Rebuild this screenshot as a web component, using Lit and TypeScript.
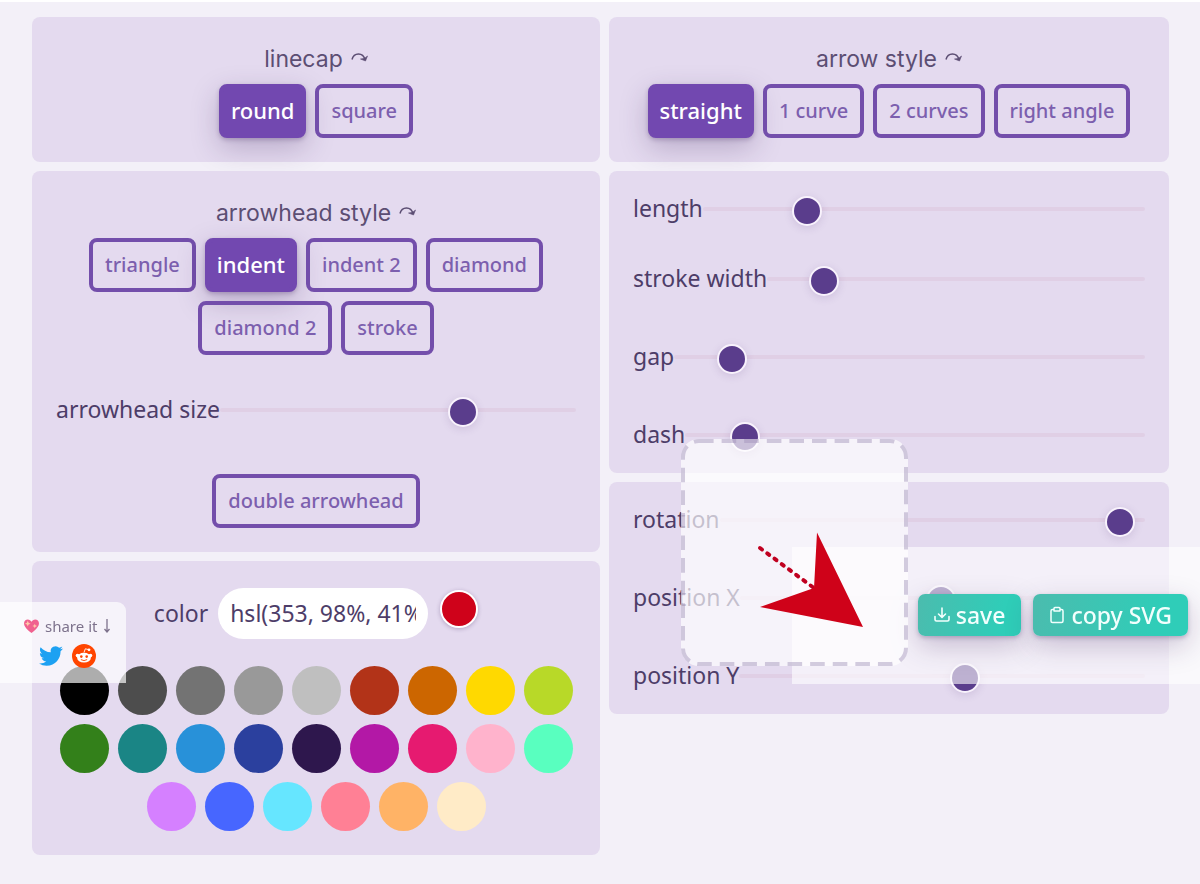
import { LitElement, html, css } from "lit";
import { customElement, property, state } from "lit/decorators.js";
import { classMap } from "lit/directives/class-map.js";
import { styleMap } from "lit/directives/style-map.js";

const SWATCHES = [
  "#000000", "#4d4d4d", "#737373", "#999999", "#bfbfbf", "#b23318", "#cc6600", "#ffd900", "#b8d928",
  "#33801a", "#1a8585", "#2891d9", "#2b409e", "#2e174d", "#b318a6", "#e61a70", "#ffb3cc", "#59ffbf",
  "#d580ff", "#4766ff", "#66e6ff", "#ff8095", "#ffb366", "#ffebc7",
];

@customElement("option-group")
class OptionGroup extends LitElement {
  @property() heading = "";
  @property({ type: Array }) options: string[] = [];
  @property() value = "";

  static styles = css`
    :host { display: block; }
    .heading {
      display: flex;
      justify-content: center;
      align-items: center;
      gap: 8px;
      margin: 0 0 7px;
      font: 400 23px/36px Inter, sans-serif;
      color: #5c4e73;
    }
    .turn { width: 17px; height: 14px; }
    .options {
      display: flex;
      flex-wrap: wrap;
      justify-content: center;
      gap: 9px;
    }
    .option {
      box-sizing: border-box;
      height: 54px;
      padding: 0 12px;
      border: 4px solid #734eab;
      border-radius: 8px;
      background: none;
      font: 500 20px/28px "Noto Sans", sans-serif;
      color: #7c5fae;
      cursor: pointer;
    }
    .option.active {
      padding: 0 8px 2px;
      background: #7248b0;
      border-color: #7248b0;
      color: #fff;
      font-size: 22px;
      box-shadow: 0 2px 4px rgba(60, 30, 90, 0.25), 0 10px 28px rgba(60, 30, 90, 0.25);
    }
  `;

  render() {
    return html`
      <h2 class="heading">
        ${this.heading}
        <svg class="turn" viewBox="0 0 17 14" fill="none" stroke="currentColor" stroke-width="1.5" aria-hidden="true">
          <path d="M1 7.500C2 3.500 4.500 2 7.500 2C11 2 13 4 14 7.500" />
          <path d="M9.500 7L14.500 9L16.500 4Q14 7 9.500 7Z" fill="currentColor" stroke-width="0.600" />
        </svg>
      </h2>
      <div class="options" role="group" aria-label=${this.heading}>
        ${this.options.map(
          (o) => html`<button
            type="button"
            class=${classMap({ option: true, active: o === this.value })}
            aria-pressed=${o === this.value ? "true" : "false"}
            @click=${() => (this.value = o)}
          >${o}</button>`
        )}
      </div>
    `;
  }
}

@customElement("range-row")
class RangeRow extends LitElement {
  @property() label = "";
  @property({ type: Number }) value = 0;

  static styles = css`
    :host { display: block; }
    .row {
      display: flex;
      align-items: center;
      height: 54px;
    }
    .label {
      padding-bottom: 2px;
      font: 400 23px/32px "Noto Sans", sans-serif;
      color: #4d3d68;
      white-space: nowrap;
    }
    .range {
      flex: 1;
      min-width: 0;
      height: 30px;
      margin: 0;
      appearance: none;
      background: none;
      cursor: pointer;
    }
    .range::-webkit-slider-runnable-track {
      height: 4px;
      border-radius: 2px;
      background: #e0cfe5;
    }
    .range::-webkit-slider-thumb {
      appearance: none;
      box-sizing: border-box;
      width: 30px;
      height: 30px;
      margin-top: -11px;
      border: 2px solid #f8f2fc;
      border-radius: 50%;
      background: #5a3d8c;
      box-shadow: 0 2px 8px rgba(80, 50, 120, 0.15);
    }
  `;

  render() {
    return html`<div class="row">
      <label class="label" for="range">${this.label}</label>
      <input class="range" id="range" type="range" min="0" max="100" step="any" .value=${String(this.value)} />
    </div>`;
  }
}

@customElement("app-root")
class AppRoot extends LitElement {
  @state() private color = "hsl(353, 98%, 41%)";

  static styles = css`
    :host {
      display: block;
      box-sizing: border-box;
      min-height: 100vh;
      padding: 15px 31px 29px 32px;
      border-top: 2px solid #fff;
      background: #f3f0f8;
      font-family: "Noto Sans", sans-serif;
      color: #4d3d68;
    }
    .columns {
      display: grid;
      grid-template-columns: 71fr 70fr;
      gap: 9px;
      align-items: start;
    }
    .column {
      display: flex;
      flex-direction: column;
      gap: 9px;
      min-width: 0;
    }
    .card {
      padding: 24px;
      border-radius: 8px;
      background: #e4daef;
    }
    .card.sliders {
      display: flex;
      flex-direction: column;
      gap: 24px;
      padding: 11px 24px;
    }
    .pair {
      display: flex;
      flex-direction: column;
      gap: 16px;
    }
    .size { margin: 28px 0 37px; }
    .color-row {
      display: flex;
      justify-content: center;
      align-items: center;
      gap: 10px;
      padding-top: 3px;
      margin-bottom: 27px;
    }
    .color-label { font-size: 23px; line-height: 32px; padding-bottom: 2px; }
    .color-input {
      box-sizing: border-box;
      width: 210px;
      height: 51px;
      padding: 0 12px 2px;
      border: 0;
      border-radius: 26px;
      background: #fff;
      font: 400 23px/32px "Noto Sans", sans-serif;
      color: #4d3d68;
    }
    .current {
      align-self: flex-start;
      box-sizing: border-box;
      width: 38px;
      height: 38px;
      margin: 2px 0 0 2px;
      padding: 0;
      border: 2px solid #fff;
      border-radius: 50%;
      box-shadow: 0 1px 4px rgba(60, 30, 90, 0.3);
    }
    .swatches {
      display: flex;
      flex-wrap: wrap;
      justify-content: center;
      gap: 9px;
    }
    .swatch {
      width: 49px;
      height: 49px;
      padding: 0;
      border: 0;
      border-radius: 50%;
      cursor: pointer;
    }
    .share {
      position: fixed;
      left: 0;
      bottom: 201px;
      box-sizing: border-box;
      width: 126px;
      height: 81px;
      padding: 12px 12px 12px 24px;
      border-radius: 0 9px 0 0;
      background: rgba(255, 255, 255, 0.68);
    }
    .share-title {
      display: flex;
      align-items: center;
      gap: 6px;
      margin: 0;
      font-size: 15px;
      line-height: 24px;
      color: #7d728c;
      white-space: nowrap;
    }
    .heart { width: 15px; height: 14px; flex: none; }
    .down { width: 8px; height: 14px; flex: none; }
    .share-links {
      display: flex;
      align-items: center;
      gap: 9px;
      padding: 6px 0 0 15px;
    }
    .share-links a { display: block; height: 24px; }
    .share-links svg { width: 24px; height: 24px; }
    .actions {
      position: fixed;
      right: 0;
      bottom: 200px;
      box-sizing: border-box;
      width: 408px;
      height: 137px;
      display: flex;
      justify-content: flex-end;
      align-items: center;
      gap: 12px;
      padding: 0 12px 2px;
      background: rgba(255, 255, 255, 0.6);
    }
    .action {
      display: flex;
      align-items: center;
      gap: 6px;
      height: 42px;
      padding: 0 16px;
      border: 0;
      border-radius: 7px;
      background: linear-gradient(100deg, #4bbcae, #2fcdb8 80%);
      font: 500 23px/32px "Noto Sans", sans-serif;
      color: #f2fffd;
      box-shadow: 0 2px 4px rgba(60, 30, 90, 0.25), 0 10px 28px rgba(60, 30, 90, 0.25);
      cursor: pointer;
    }
    .action svg { width: 16px; height: 18px; flex: none; }
    .preview {
      position: fixed;
      right: 292px;
      top: 439px;
      width: 227px;
      height: 227px;
      border-radius: 18px;
      background: rgba(255, 255, 255, 0.68);
    }
    .preview svg { display: block; width: 100%; height: 100%; }
  `;

  render() {
    return html`
      <main class="columns">
        <div class="column">
          <section class="card">
            <option-group heading="linecap" .options=${["round", "square"]} value="round"></option-group>
          </section>
          <section class="card">
            <option-group
              heading="arrowhead style"
              .options=${["triangle", "indent", "indent 2", "diamond", "diamond 2", "stroke"]}
              value="indent"
            ></option-group>
            <range-row class="size" label="arrowhead size" value="70"></range-row>
            <toggle-button label="double arrowhead"></toggle-button>
          </section>
          <section class="card">
            <div class="color-row">
              <label class="color-label" for="color">color</label>
              <input
                class="color-input"
                id="color"
                type="text"
                .value=${this.color}
                @change=${(e: Event) => (this.color = (e.target as HTMLInputElement).value)}
              />
              <button class="current" type="button" aria-label="current color" style=${styleMap({ background: this.color })}></button>
            </div>
            <div class="swatches">
              ${SWATCHES.map(
                (c) => html`<button
                  class="swatch"
                  type="button"
                  aria-label=${c}
                  style=${styleMap({ background: c })}
                  @click=${() => (this.color = c)}
                ></button>`
              )}
            </div>
          </section>
        </div>

        <div class="column">
          <section class="card">
            <option-group
              heading="arrow style"
              .options=${["straight", "1 curve", "2 curves", "right angle"]}
              value="straight"
            ></option-group>
          </section>
          <section class="card sliders">
            <div class="pair">
              <range-row label="length" value="21.600"></range-row>
              <range-row label="stroke width" value="12"></range-row>
            </div>
            <range-row label="gap" value="9.600"></range-row>
            <range-row label="dash" value="10.500"></range-row>
          </section>
          <section class="card sliders">
            <range-row label="rotation" value="97.500"></range-row>
            <range-row label="position X" value="49.500"></range-row>
            <range-row label="position Y" value="56.200"></range-row>
          </section>
        </div>
      </main>

      <aside class="share">
        <p class="share-title">
          <svg class="heart" viewBox="0 0 16 15" aria-hidden="true">
            <path fill="#f0618f" d="M8 15C3 11 0 8 0 4.500C0 2 1.800.5 4 .5C5.800.5 7.300 1.500 8 3C8.700 1.500 10.200.5 12 .5C14.200.5 16 2 16 4.500C16 8 13 11 8 15Z" />
            <path fill="#ffc9a8" d="M4 2L4.900 4.100L7 5L4.900 5.900L4 8L3.100 5.900L1 5L3.100 4.100ZM11.500 5L12.200 6.800L14 7.500L12.200 8.200L11.500 10L10.800 8.200L9 7.500L10.800 6.800Z" />
          </svg>
          share it
          <svg class="down" viewBox="0 0 8 14" fill="none" stroke="currentColor" stroke-width="1.300" aria-hidden="true">
            <path d="M4 0V13M1.500 10L4 13L6.500 10" />
          </svg>
        </p>
        <div class="share-links">
          <a href="#twitter" aria-label="Twitter">
            <svg viewBox="0 0 24 24" fill="#1da1f2">
              <path d="M23.953 4.570a10 10 0 01-2.825.775 4.958 4.958 0 002.163-2.723c-.951.555-2.005.959-3.127 1.184a4.920 4.920 0 00-8.384 4.482C7.690 8.095 4.067 6.130 1.640 3.162a4.822 4.822 0 00-.666 2.475c0 1.710.870 3.213 2.188 4.096a4.904 4.904 0 01-2.228-.616v.060a4.923 4.923 0 003.946 4.827 4.996 4.996 0 01-2.212.085 4.936 4.936 0 004.604 3.417 9.867 9.867 0 01-6.102 2.105c-.390 0-.779-.023-1.170-.067a13.995 13.995 0 007.557 2.209c9.053 0 13.998-7.496 13.998-13.985 0-.210 0-.420-.015-.630A9.935 9.935 0 0024 4.590z" />
            </svg>
          </a>
          <a href="#reddit" aria-label="Reddit">
            <svg viewBox="0 0 24 24">
              <circle cx="12" cy="12" r="12" fill="#ff4500" />
              <path d="M12 8.500L13.300 4.800L16.500 5.600" fill="none" stroke="#fff" stroke-width="0.900" />
              <g fill="#fff">
                <circle cx="17" cy="5.800" r="1.400" />
                <circle cx="5.500" cy="11.600" r="1.800" />
                <circle cx="18.500" cy="11.600" r="1.800" />
                <ellipse cx="12" cy="13.700" rx="6.900" ry="4.900" />
              </g>
              <g fill="#ff4500">
                <circle cx="9.300" cy="12.600" r="1.300" />
                <circle cx="14.700" cy="12.600" r="1.300" />
              </g>
              <path d="M9.200 15.800Q12 17.600 14.800 15.800" fill="none" stroke="#ff4500" stroke-width="0.900" stroke-linecap="round" />
            </svg>
          </a>
        </div>
      </aside>

      <div class="actions">
        <button class="action" type="button">
          <svg viewBox="0 0 16 18" fill="none" stroke="currentColor" stroke-width="1.600" stroke-linecap="round" stroke-linejoin="round" aria-hidden="true">
            <path d="M8 2V11M4.500 8L8 11.300L11.500 8M1 10.500V13.500Q1 15 2.500 15H13.500Q15 15 15 13.500V10.500" />
          </svg>
          save
        </button>
        <button class="action" type="button">
          <svg viewBox="0 0 16 18" fill="none" stroke="currentColor" stroke-width="1.500" stroke-linejoin="round" aria-hidden="true">
            <path d="M5 3.500H3.500Q2 3.500 2 5V15Q2 16.500 3.500 16.500H12.500Q14 16.500 14 15V5Q14 3.500 12.500 3.500H11" />
            <path d="M5 2.500Q5 1.500 6 1.500H10Q11 1.500 11 2.500V5H5Z" />
          </svg>
          copy SVG
        </button>
      </div>

      <div class="preview" role="img" aria-label="arrow preview">
        <svg viewBox="0 0 227 227">
          <rect x="2" y="2" width="223" height="223" rx="16" fill="none" stroke="#a091b9" stroke-opacity="0.450" stroke-width="4" stroke-dasharray="14.600 8" />
          <path d="M79 109L133 149" fill="none" stroke="#c00020" stroke-width="4" stroke-linecap="round" stroke-dasharray="2.500 6.500" />
          <path d="M182 188L136 93.500L133 149L79 168Z" fill="#cf0219" />
        </svg>
      </div>
    `;
  }
}

@customElement("toggle-button")
class ToggleButton extends LitElement {
  @property() label = "";
  @state() private on = false;

  static styles = css`
    :host {
      display: flex;
      justify-content: center;
    }
    .toggle {
      box-sizing: border-box;
      height: 54px;
      padding: 0 12px;
      border: 4px solid #734eab;
      border-radius: 8px;
      background: none;
      font: 500 20px/28px "Noto Sans", sans-serif;
      color: #7c5fae;
      cursor: pointer;
    }
    .toggle.on {
      background: #7248b0;
      color: #fff;
    }
  `;

  render() {
    return html`<button
      type="button"
      class=${classMap({ toggle: true, on: this.on })}
      aria-pressed=${this.on ? "true" : "false"}
      @click=${() => (this.on = !this.on)}
    >${this.label}</button>`;
  }
}
